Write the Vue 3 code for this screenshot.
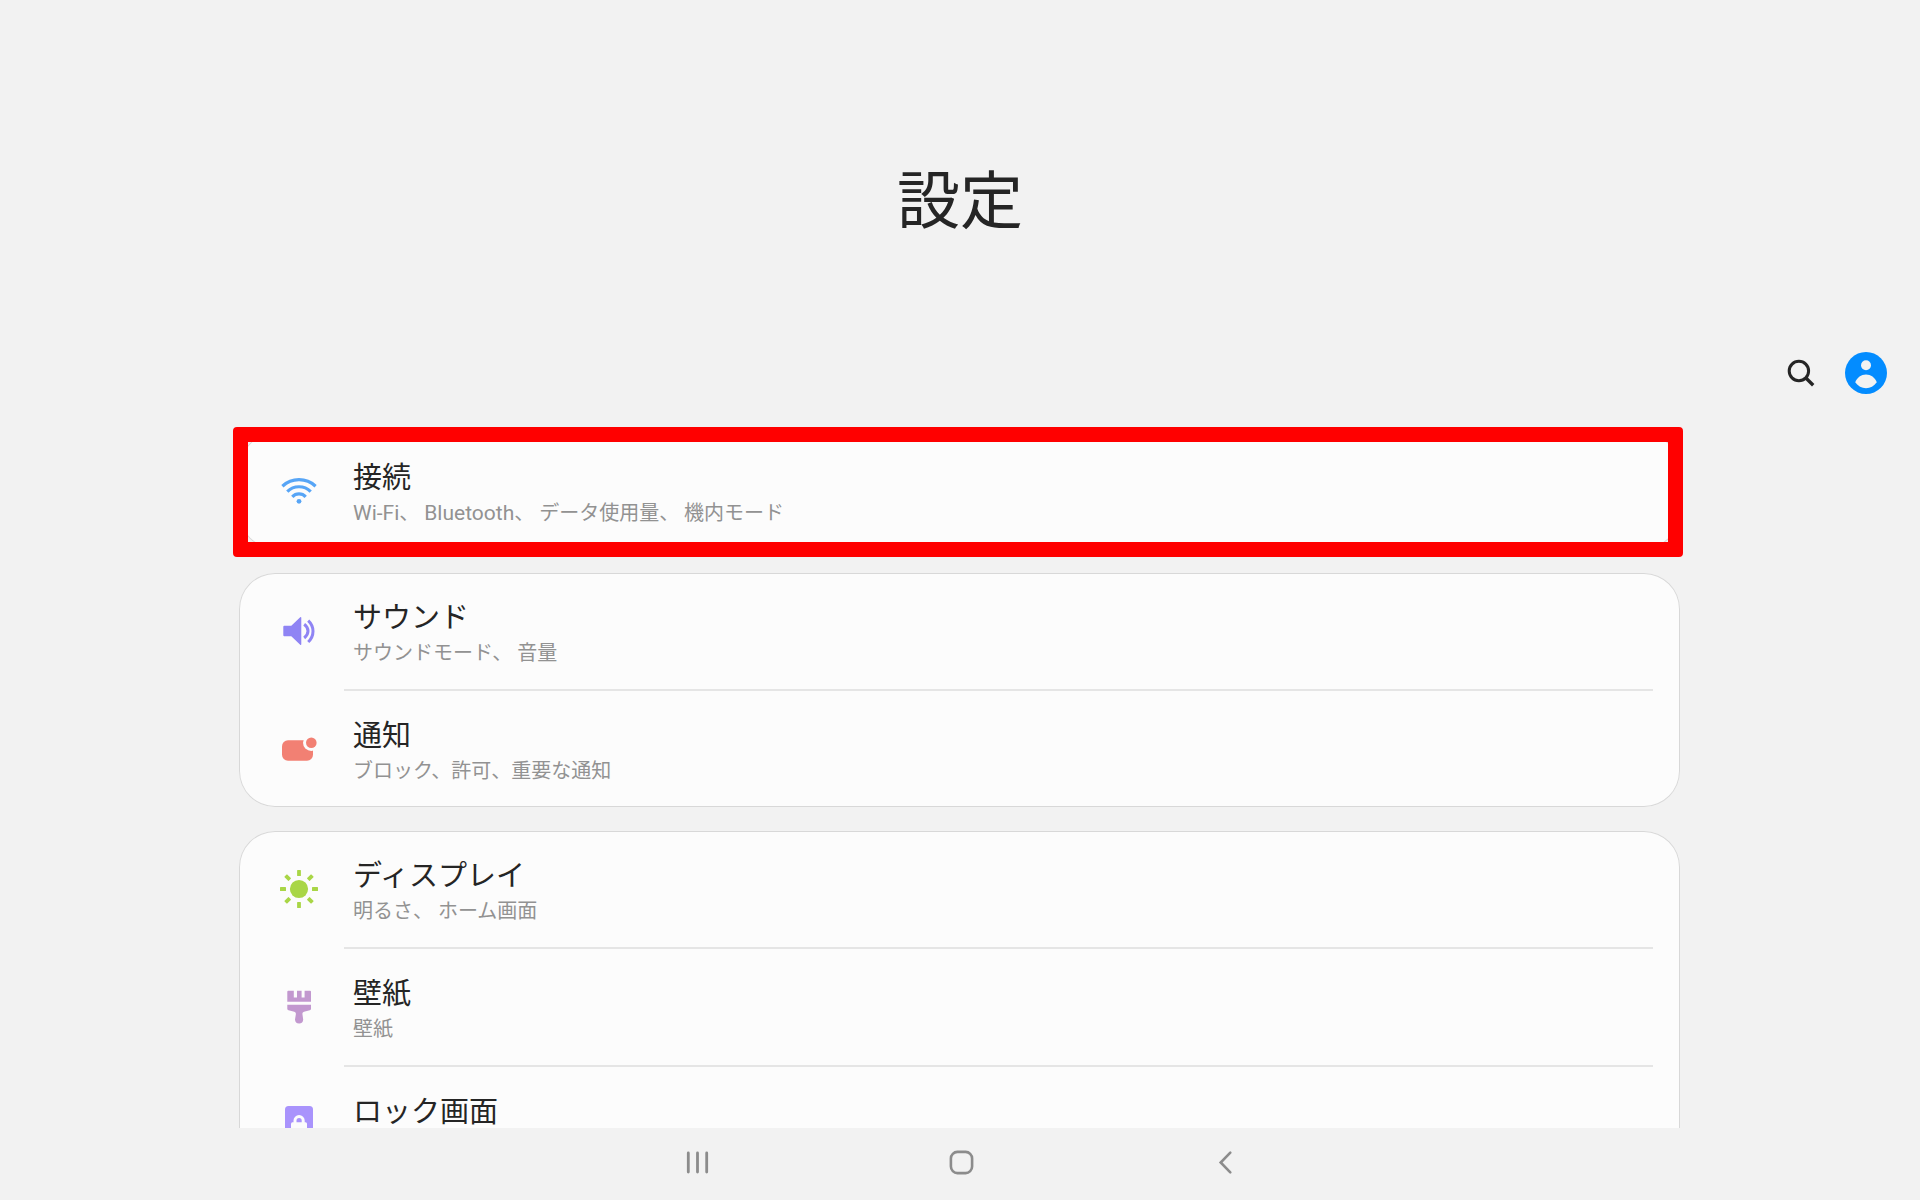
<script setup>
const groups = [
  {
    highlighted: true,
    items: [{ icon: 'wifi', title: '接続', summary: 'Wi-Fi、 Bluetooth、 データ使用量、 機内モード' }],
  },
  {
    items: [
      { icon: 'sound', title: 'サウンド', summary: 'サウンドモード、 音量' },
      { icon: 'notification', title: '通知', summary: 'ブロック、許可、重要な通知' },
    ],
  },
  {
    items: [
      { icon: 'display', title: 'ディスプレイ', summary: '明るさ、 ホーム画面' },
      { icon: 'wallpaper', title: '壁紙', summary: '壁紙' },
      { icon: 'lock', title: 'ロック画面', summary: '' },
    ],
  },
]

const rayAngles = [0, 45, 90, 135, 180, 225, 270, 315]

// Latin words are set slightly larger than the kana and kanji around them.
const isLatin = (part) => /^[A-Za-z-]+$/.test(part)
const splitScripts = (text) => text.split(/([A-Za-z-]+)/).filter(Boolean)
</script>

<template>
  <div class="screen">
    <main class="content">
      <header class="header">
        <h1 class="heading">設定</h1>
        <div class="toolbar">
          <button class="tool" type="button" aria-label="検索">
            <svg width="42" height="42" viewBox="0 0 42 42" fill="none" stroke="#252525" stroke-width="3">
              <circle cx="18.9" cy="19" r="9.7" />
              <path d="M25.7 25.8 L33.2 33.3" stroke-width="3.4" />
            </svg>
          </button>
          <button class="tool" type="button" aria-label="アカウント">
            <svg width="42" height="42" viewBox="0 0 42 42">
              <circle cx="21" cy="21" r="21" fill="#038cff" />
              <circle cx="21" cy="13.2" r="5" fill="#f2f2f2" />
              <path d="M10.2 30.3 C12.3 25.2 16 22.4 21 22.4 S29.7 25.2 31.8 30.3 C29 34.2 25.3 36.2 21 36.2 S13 34.2 10.2 30.3Z" fill="#f2f2f2" />
            </svg>
          </button>
        </div>
      </header>

      <div class="groups">
        <section v-for="(group, g) in groups" :key="g" class="card">
          <a v-for="item in group.items" :key="item.title" class="row" href="#">
            <svg class="icon" width="40" height="40" viewBox="0 0 40 40" aria-hidden="true">
              <g v-if="item.icon === 'wifi'" fill="none" stroke="#57a5f6" stroke-width="3.2">
                <path d="M3.4 15.2 A24.5 24.5 0 0 1 36.6 15.2" />
                <path d="M8.3 20.6 A16.5 16.5 0 0 1 31.7 20.6" />
                <path d="M13.3 25.8 A9.2 9.2 0 0 1 26.7 25.8" />
                <circle cx="20" cy="30.3" r="2.4" fill="#57a5f6" stroke="none" />
              </g>
              <g v-else-if="item.icon === 'sound'" fill="none" stroke="#8f84f4" stroke-width="3">
                <path d="M5.3 14.7 H12.3 L21.2 6.3 Q22.3 5.6 22.3 7 V33 Q22.3 34.4 21.2 33.7 L12.3 25.3 H5.3 Q4.3 25.3 4.3 24.3 V15.7 Q4.3 14.7 5.3 14.7Z" fill="#8f84f4" stroke="none" />
                <path d="M25.2 13.2 Q29 16 29 20 T25.2 27" />
                <path d="M29.2 9.6 Q34 14 34 20.3 T29.2 31" />
              </g>
              <g v-else-if="item.icon === 'notification'" fill="#f28073">
                <rect x="3" y="11.3" width="31" height="20.5" rx="6" />
                <circle cx="32.3" cy="13.7" r="8.3" fill="#fcfcfc" />
                <circle cx="32.3" cy="13.7" r="5.3" />
              </g>
              <g v-else-if="item.icon === 'display'" fill="#a9d646">
                <circle cx="20" cy="20" r="9.1" />
                <rect v-for="angle in rayAngles" :key="angle" x="18.1" y="1" width="3.8" height="6" rx="0.5" :transform="`rotate(${angle} 20 20)`" />
              </g>
              <g v-else-if="item.icon === 'wallpaper'" fill="#c298cf">
                <path d="M9.3 3.7 H14.8 V10.5 H18 V3.7 H22.6 V10.5 H25.6 V3.7 H31 Q32 3.7 32 4.7 V14.8 H8.3 V4.7 Q8.3 3.7 9.3 3.7Z" />
                <path d="M8.3 17.8 H32 V21.8 Q32 23 30.8 23.3 L25 24.8 Q23.2 25.4 23.4 27 L24.2 32.5 Q24 36.6 20.1 36.6 T16 32.5 L16.9 27 Q17.1 25.4 15.3 24.8 L9.5 23.3 Q8.3 23 8.3 21.8Z" />
              </g>
              <g v-else fill="#a993fc">
                <rect x="6" y="1" width="28" height="36" rx="3.5" />
                <rect x="12" y="17.3" width="16" height="13" rx="1.5" fill="#fcfcfc" />
                <path d="M16 18 V15.6 A4.1 4.1 0 0 1 24.2 15.6 V18" fill="none" stroke="#fcfcfc" stroke-width="3" />
              </g>
            </svg>
            <span class="text">
              <span class="title">{{ item.title }}</span>
              <span class="summary"><span v-for="(part, p) in splitScripts(item.summary)" :key="p" :class="{ latin: isLatin(part) }">{{ part }}</span></span>
            </span>
          </a>
          <div v-if="group.highlighted" class="highlight"></div>
        </section>
      </div>
    </main>

    <nav class="navbar">
      <button class="nav-button" type="button" aria-label="履歴">
        <svg width="28" height="28" viewBox="0 0 28 28" fill="none" stroke="#8c8c8c" stroke-width="2.8" stroke-linecap="round">
          <path d="M5.3 5 V24 M14.5 5 V24 M23.7 5 V24" />
        </svg>
      </button>
      <button class="nav-button" type="button" aria-label="ホーム">
        <svg width="28" height="28" viewBox="0 0 28 28" fill="none" stroke="#8c8c8c" stroke-width="2.6">
          <rect x="3.9" y="3.9" width="21.2" height="21.2" rx="6.5" />
        </svg>
      </button>
      <button class="nav-button" type="button" aria-label="戻る">
        <svg width="28" height="28" viewBox="0 0 28 28" fill="none" stroke="#8c8c8c" stroke-width="2.6" stroke-linecap="round">
          <path d="M19.3 4.7 L9.7 14.5 L19.3 24.3" />
        </svg>
      </button>
    </nav>
  </div>
</template>

<style>
body {
  background: #f2f2f2;
}
</style>

<style scoped>
.screen {
  display: flex;
  flex-direction: column;
  height: 100vh;
  background: #f2f2f2;
  color: #252525;
  font-family: Roboto, "Noto Sans CJK JP", sans-serif;
}

.content {
  flex: 1;
  min-height: 0;
  overflow: hidden;
}

.header {
  display: flex;
  flex-direction: column;
}

.heading {
  margin: 0;
  padding: 158px 0 106px;
  font-size: 63px;
  line-height: 88px;
  font-weight: 400;
  text-align: center;
}

.toolbar {
  display: flex;
  justify-content: flex-end;
  gap: 23px;
  padding: 0 33px 39px 0;
}

.tool,
.nav-button {
  display: flex;
  align-items: center;
  justify-content: center;
  padding: 0;
  border: 0;
  background: none;
}

.groups {
  display: flex;
  flex-direction: column;
  gap: 24px;
  margin: 0 12.5% 0 calc(12.5% - 1px);
}

.card {
  position: relative;
  border-radius: 36px;
  background: #fcfcfc;
  box-shadow: inset 0 0 0 1px #d8d8d8;
}

.row {
  display: flex;
  align-items: center;
  gap: 34px;
  height: 116px;
  padding-left: 40px;
  color: inherit;
  text-decoration: none;
}

.row + .row {
  padding-top: 2px;
  background: linear-gradient(#e5e5e5, #e5e5e5) no-repeat 105px 0 / calc(100% - 132px) 2px;
}

.icon {
  flex: none;
}

.text {
  display: flex;
  flex-direction: column;
  padding-top: 4px;
}

.title {
  font-size: 29px;
  line-height: 40px;
}

.summary {
  min-height: 30px;
  color: #929292;
  font-size: 20px;
  line-height: 30px;
}

.latin {
  font-size: 21px;
}

.highlight {
  position: absolute;
  inset: -6px -3px -8px -6px;
  border: 15px solid #ff0000;
  border-radius: 4px;
  pointer-events: none;
}

.navbar {
  display: flex;
  flex: none;
  justify-content: center;
  height: 72px;
  padding: 0 0 4px 2px;
  box-sizing: border-box;
}

.nav-button {
  width: 264px;
}
</style>
